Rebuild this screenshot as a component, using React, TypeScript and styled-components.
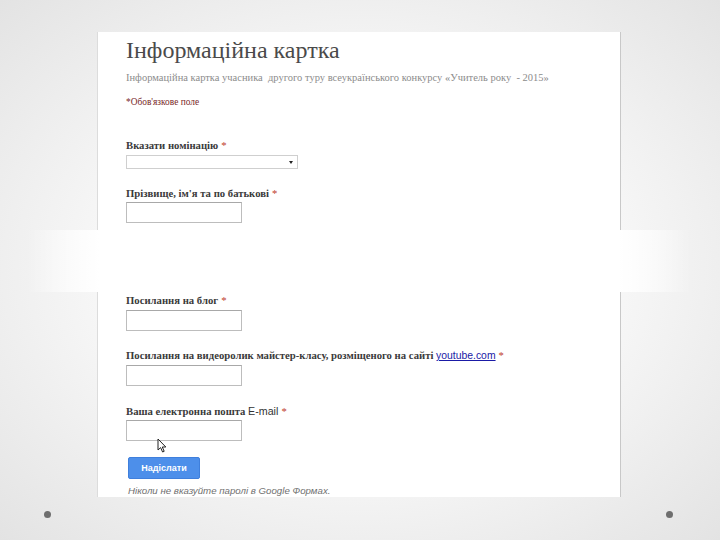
import styled, { createGlobalStyle } from "styled-components";

const GlobalStyle = createGlobalStyle`
  html, body {
    margin: 0;
    padding: 0;
  }
  body {
    width: 720px;
    height: 540px;
    overflow: hidden;
  }
`;

const Slide = styled.div`
  width: 720px;
  height: 540px;
  box-sizing: border-box;
  padding-top: 32px;
  background: radial-gradient(ellipse farthest-corner at 50% 50%, #ffffff 0%, #fbfbfb 40%, #e3e3e3 100%);
  font-family: "Liberation Serif", "DejaVu Serif", serif;
  display: flex;
  flex-direction: column;
`;

const Sheet = styled.div`
  width: 524px;
  margin-left: 97px;
  display: flex;
  flex-direction: column;
`;

const Panel = styled.div<{ $h: number }>`
  position: relative;
  height: ${(p) => p.$h}px;
  box-sizing: border-box;
  background: #ffffff;
  border-left: 1px solid #dcdcdc;
  border-right: 1px solid #c8c8c8;
  padding-left: 28px;
  overflow: hidden;
  display: flex;
  flex-direction: column;
  align-items: flex-start;
`;

const Band = styled.div`
  height: 62px;
  margin: 0 -70px;
  background: linear-gradient(
    to right,
    rgba(255, 255, 255, 0) 0%,
    rgba(255, 255, 255, 0.6) 6%,
    #ffffff 11%,
    #ffffff 89%,
    rgba(255, 255, 255, 0.6) 94%,
    rgba(255, 255, 255, 0) 100%
  );
`;

const Title = styled.h1`
  margin: 4px 0 0;
  font-size: 24px;
  line-height: 28px;
  font-weight: 400;
  color: #4a4a4a;
`;

const Subtitle = styled.div`
  margin-top: 6px;
  font-size: 10.5px;
  line-height: 16px;
  color: #8c8c8c;
  white-space: nowrap;
`;

const Required = styled.div`
  margin-top: 10px;
  font-size: 9.4px;
  line-height: 12px;
  color: #7a2a2a;
`;

const Label = styled.div<{ $top: number }>`
  margin-top: ${(p) => p.$top}px;
  font-size: 10.7px;
  line-height: 14px;
  font-weight: 700;
  color: #3a3a3a;
  white-space: nowrap;
`;

const Star = styled.span`
  font-weight: 400;
  color: #c0392b;
  margin-left: 3px;
`;

const Sans = styled.span`
  font-family: "Liberation Sans", Arial, sans-serif;
  font-weight: 400;
  color: #333;
`;

const Link = styled.a`
  font-family: "Liberation Sans", Arial, sans-serif;
  font-size: 10.4px;
  font-weight: 400;
  color: #1a1aa6;
  text-decoration: underline;
`;

const Select = styled.div`
  margin-top: 3px;
  width: 172px;
  height: 14px;
  box-sizing: border-box;
  border: 1px solid #cfcfcf;
  display: flex;
  align-items: center;
  justify-content: flex-end;
  padding-right: 4px;
`;

const Arrow = styled.span`
  width: 0;
  height: 0;
  border-left: 2px solid transparent;
  border-right: 2px solid transparent;
  border-top: 3px solid #222;
`;

const Input = styled.div<{ $top?: number }>`
  margin-top: ${(p) => p.$top ?? 2}px;
  width: 116px;
  height: 21px;
  flex-shrink: 0;
  box-sizing: border-box;
  border: 1px solid #bdbdbd;
  border-top-color: #a8a8a8;
`;

const Button = styled.div`
  margin: 16px 0 0 2px;
  width: 72px;
  height: 23px;
  border-radius: 2px;
  background: #4d8fea;
  border: 1px solid #3f7fdc;
  box-sizing: border-box;
  display: flex;
  align-items: center;
  justify-content: center;
  font-family: "Liberation Sans", Arial, sans-serif;
  font-size: 9px;
  font-weight: 700;
  color: #ffffff;
`;

const Note = styled.div`
  margin: 6px 0 0 2px;
  font-family: "Liberation Sans", Arial, sans-serif;
  font-style: italic;
  font-size: 9.7px;
  line-height: 12px;
  color: #6f6f6f;
`;

const Cursor = styled.svg`
  position: absolute;
  left: 59px;
  top: 146px;
`;

const Bullets = styled.div`
  margin-top: 14px;
  display: flex;
  justify-content: space-between;
  padding: 0 47px 0 44px;
`;

const Bullet = styled.span`
  width: 7px;
  height: 7px;
  border-radius: 50%;
  background: #6e6e6e;
`;

export default function App() {
  return (
    <>
      <GlobalStyle />
      <Slide>
        <Sheet>
          <Panel $h={198}>
            <Title>Інформаційна картка</Title>
            <Subtitle>
              Інформаційна картка учасника&nbsp; другого туру всеукраїнського конкурсу «Учитель року&nbsp; - 2015»
            </Subtitle>
            <Required>*Обов'язкове поле</Required>
            <Label $top={30}>
              Вказати номінацію<Star>*</Star>
            </Label>
            <Select>
              <Arrow />
            </Select>
            <Label $top={17}>
              Прізвище, ім'я та по батькові<Star>*</Star>
            </Label>
            <Input />
          </Panel>
          <Band />
          <Panel $h={205}>
            <Label $top={1}>
              Посилання на блог<Star>*</Star>
            </Label>
            <Input $top={3} />
            <Label $top={17}>
              Посилання на видеоролик майстер-класу, розміщеного на сайті <Link>youtube.com</Link>
              <Star>*</Star>
            </Label>
            <Input />
            <Label $top={18}>
              Ваша електронна пошта <Sans>E-mail</Sans>
              <Star>*</Star>
            </Label>
            <Input />
            <Button>Надіслати</Button>
            <Note>Ніколи не вказуйте паролі в Google Формах.</Note>
            <Cursor width="10" height="15" viewBox="0 0 10 15">
              <path d="M1 1 L1 12 L3.6 9.6 L5.6 14 L7.2 13.3 L5.3 9 L8.8 9 Z" fill="#fff" stroke="#222" strokeWidth="1" strokeLinejoin="round" />
            </Cursor>
          </Panel>
        </Sheet>
        <Bullets>
          <Bullet />
          <Bullet />
        </Bullets>
      </Slide>
    </>
  );
}
